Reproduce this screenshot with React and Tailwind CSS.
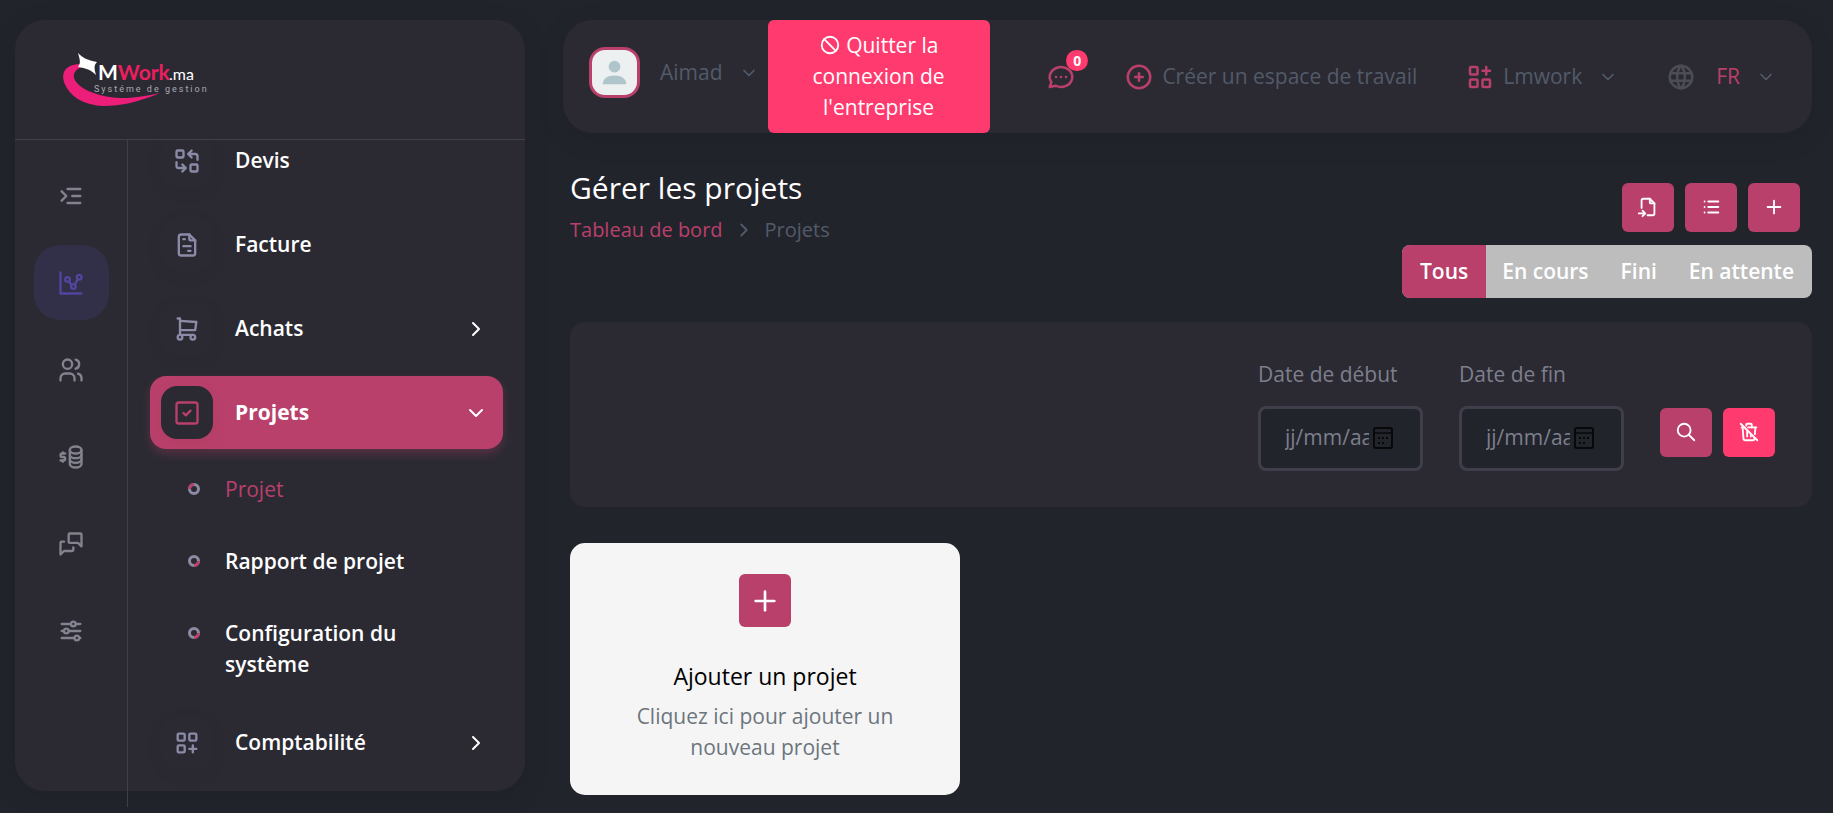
import {
  TbAdjustmentsHorizontal,
  TbApps,
  TbBan,
  TbBusinessplan,
  TbChartDots,
  TbCirclePlus,
  TbFileImport,
  TbFileInvoice,
  TbIndentIncrease,
  TbLayoutGridAdd,
  TbList,
  TbMessages,
  TbPlus,
  TbReplace,
  TbSearch,
  TbShoppingCart,
  TbSquareCheck,
  TbTrashOff,
  TbUsers,
  TbWorld,
} from "react-icons/tb";
import { FiChevronDown, FiChevronRight } from "react-icons/fi";

const RAIL = [
  { label: "Menu", icon: TbIndentIncrease },
  { label: "Tableau", icon: TbChartDots, active: true },
  { label: "Utilisateurs", icon: TbUsers },
  { label: "Finances", icon: TbBusinessplan },
  { label: "Messages", icon: TbMessages },
  { label: "Réglages", icon: TbAdjustmentsHorizontal },
];

const MENU = [
  { label: "Devis", icon: TbReplace },
  { label: "Facture", icon: TbFileInvoice },
  { label: "Achats", icon: TbShoppingCart, more: true },
  {
    label: "Projets",
    icon: TbSquareCheck,
    active: true,
    children: ["Projet", "Rapport de projet", "Configuration du système"],
  },
  { label: "Comptabilité", icon: TbLayoutGridAdd, more: true },
];

const TABS = ["Tous", "En cours", "Fini", "En attente"];

function Logo() {
  return (
    <svg viewBox="0 0 150 56" className="h-14 w-[150px]" role="img" aria-label="MWork.ma">
      <path
        d="M17 12C4 13-1 20 2 30c5 14 19 23 39 24 18 0 36-4 57-13-22 5-38 6-50 4C29 42 15 35 12 26c-1-5 2-9 8-11z"
        fill="#ed1e79"
      />
      <path d="M16 1c5 5 9 7 19 9-3 3-3 6-1 13-5-5-10-7-18-8 3-4 2-7 0-14z" fill="#fff" />
      <text x="36" y="28" fontFamily="Lato" fontSize="21" fontWeight="700" fill="#fff">
        M<tspan fill="#ed1e60">Work</tspan>
      </text>
      <text x="107" y="28" fontFamily="Lato" fontSize="16" fill="#fff">.ma</text>
      <text x="32" y="40" fontFamily="Roboto" fontSize="9" className="tracking-[2px]" fill="#a9a9b2">
        Systéme de gestion
      </text>
    </svg>
  );
}

function Bullet({ active }) {
  return (
    <svg viewBox="0 0 12 12" className={`mt-[9px] h-3 w-3 shrink-0 ${active ? "rotate-180" : ""}`} fill="none" strokeWidth="3">
      <circle cx="6" cy="6" r="4.5" stroke="#8b8ba3" />
      <path d="M10.5 6A4.5 4.5 0 0 1 6 10.5" stroke="#b9406a" />
    </svg>
  );
}

function ChatIcon() {
  return (
    <svg viewBox="0 0 24 24" className="h-[30px] w-[30px]" fill="none" stroke="currentColor" strokeWidth="2" strokeLinecap="round" strokeLinejoin="round">
      <path d="M3 20l1.3 -3.9a9 8 0 1 1 3.4 2.9l-4.7 1" />
      <path d="M12 12v.01M8 12v.01M16 12v.01" />
    </svg>
  );
}

function CalendarIcon() {
  return (
    <svg viewBox="0 0 20 22" className="h-[22px] w-5 shrink-0" fill="none" stroke="#08080a">
      <rect x="1" y="1" width="18" height="20" rx="2" strokeWidth="2" />
      <path d="M1 6h18" strokeWidth="1.5" />
      <path d="M5 11h2M9 11h2M13 11h2M5 16h2M9 16h2" strokeWidth="2" />
    </svg>
  );
}

function IconButton({ label, icon: Icon, danger }) {
  return (
    <button
      type="button"
      aria-label={label}
      className={`flex h-[49px] w-[52px] items-center justify-center rounded-md pb-0.5 text-white ${danger ? "bg-[#ff3a6e]" : "bg-[#b9406a]"}`}
    >
      <Icon size={22} />
    </button>
  );
}

function Sidebar() {
  return (
    <aside className="sticky top-0 h-screen w-[525px] shrink-0 pt-5 pb-[22px] pl-[15px]">
      <div className="flex h-full flex-col rounded-[30px] bg-[#2b2a33] shadow-[0_6px_30px_rgba(0,0,0,0.08)]">
        <div className="flex h-[120px] shrink-0 items-center border-b border-[#3f3f4c] pl-[47px]">
          <a href="#accueil">
            <Logo />
          </a>
        </div>

        <div className="flex min-h-0 grow">
          <nav className="-mb-4 flex w-[113px] shrink-0 flex-col items-center gap-3 border-r border-[#3f3f4c] pt-[18px]">
            {RAIL.map(({ label, icon: Icon, active }) => (
              <a
                key={label}
                href="#rail"
                aria-label={label}
                className={`flex h-[75px] w-[75px] items-center justify-center rounded-[26px] ${active ? "bg-[#322f48] text-[#51459d]" : "text-[#83838f]"}`}
              >
                <Icon size={28} />
              </a>
            ))}
          </nav>

          <nav className="grow overflow-hidden rounded-br-[30px] px-[22px]">
            <ul className="-mt-4 flex flex-col gap-[11px]">
              {MENU.map(({ label, icon: Icon, active, more, children }) => (
                <li key={label}>
                  <a
                    href="#menu"
                    className={`flex h-[73px] items-center rounded-2xl px-[11px] text-[21px] text-white ${active ? "bg-[#b9406a] font-bold shadow-[0_5px_10px_rgba(185,64,106,0.3)]" : "font-semibold"}`}
                  >
                    <span
                      className={`mr-[22px] flex h-[53px] w-[52px] items-center justify-center rounded-2xl bg-[#2b2a33] shadow-[0_4px_20px_rgba(0,0,0,0.04)] ${active ? "text-[#b9406a]" : "text-[#8b8ba7]"}`}
                    >
                      <Icon size={28} />
                    </span>
                    <span className="grow">{label}</span>
                    {more && <FiChevronRight size={24} className="mr-1" />}
                    {active && <FiChevronDown size={24} className="mr-1" />}
                  </a>
                  {children && (
                    <ul className="-mb-[5px] flex flex-col gap-px pt-[5px]">
                      {children.map((child, i) => (
                        <li key={child}>
                          <a
                            href="#sous-menu"
                            className={`flex gap-[25px] py-5 pr-20 pl-[38px] text-[21px] leading-[31px] ${i === 0 ? "text-[#b9406a]" : "font-semibold text-white"}`}
                          >
                            <Bullet active={i === 0} />
                            {child}
                          </a>
                        </li>
                      ))}
                    </ul>
                  )}
                </li>
              ))}
            </ul>
          </nav>
        </div>
      </div>
    </aside>
  );
}

function Topbar() {
  return (
    <header className="flex h-[113px] items-center justify-between rounded-[30px] bg-[#2b2a33] pr-9 pl-[26px] text-[21px] text-[#525b69] shadow-[0_6px_30px_rgba(0,0,0,0.08)]">
      <div className="flex h-full items-center">
        <button type="button" className="mb-2 flex items-center">
          <svg viewBox="0 0 46 46" className="mr-5 h-[51px] w-[51px] rounded-2xl border-3 border-[#b9406a] bg-[#ecf0f1]">
            <circle cx="23" cy="17" r="6" fill="#b0c4cc" />
            <path d="M11 35c0-6 5-9 12-9s12 3 12 9z" fill="#b0c4cc" />
          </svg>
          Aimad
          <FiChevronDown size={20} className="ml-4" />
        </button>
        <button type="button" className="ml-[9px] h-full w-[222px] rounded-md bg-[#ff3a6e] px-9 leading-[31px] text-white">
          <TbBan size={22} className="mb-1 inline" /> Quitter la connexion de l'entreprise
        </button>
      </div>

      <div className="flex items-center">
        <button type="button" aria-label="Messages" className="relative mr-12 text-[#b9406a]">
          <ChatIcon />
          <span className="absolute -top-3 left-5 flex h-[21px] w-[22px] items-center justify-center rounded-full bg-[#ff3a6e] text-[14px] font-bold text-white">
            0
          </span>
        </button>
        <button type="button" className="mr-12 flex items-center gap-2">
          <TbCirclePlus size={30} className="text-[#b9406a]" />
          Créer un espace de travail
        </button>
        <button type="button" className="mr-12 flex items-center">
          <TbApps size={30} className="mr-2 text-[#b9406a]" />
          Lmwork
          <FiChevronDown size={20} className="ml-4" />
        </button>
        <button type="button" className="flex items-center">
          <TbWorld size={30} className="mr-5 text-[#4c4d54]" />
          <span className="text-[#b9406a]">FR</span>
          <FiChevronDown size={20} className="ml-4" />
        </button>
      </div>
    </header>
  );
}

function DateField({ id, label }) {
  return (
    <div className="w-[165px]">
      <label htmlFor={id} className="block text-[21px] leading-[31px] text-[#7d7f8c]">
        {label}
      </label>
      <div className="mt-4 flex h-[65px] items-center gap-1 rounded-lg border-3 border-[#3f3e4a] bg-[#22242c] pb-0.5 pl-6">
        <input
          id={id}
          type="text"
          placeholder="jj/mm/aaaa"
          className="w-[84px] text-[21px] text-[#7d7f8c] outline-none placeholder:text-[#7d7f8c]"
        />
        <CalendarIcon />
      </div>
    </div>
  );
}

export default function App() {
  return (
    <div className="flex min-h-screen bg-[#22242c] font-['Open_Sans',sans-serif]">
      <Sidebar />

      <div className="min-w-0 grow pt-5 pr-[21px] pb-4 pl-[38px]">
        <Topbar />

        <main className="pl-[7px]">
          <div className="flex justify-between pt-9">
            <div>
              <h1 className="text-[30px] leading-[38px] font-medium text-white">Gérer les projets</h1>
              <nav className="mt-2 flex items-center text-[20px] leading-[30px] text-[#525b69]">
                <a href="#tableau" className="text-[#b9406a]">
                  Tableau de bord
                </a>
                <FiChevronRight size={22} className="mx-2.5" />
                <span>Projets</span>
              </nav>
            </div>
            <div className="flex flex-col items-end gap-[13px] pt-[14px]">
              <div className="flex gap-[11px] pr-3">
                <IconButton label="Importer" icon={TbFileImport} />
                <IconButton label="Liste" icon={TbList} />
                <IconButton label="Ajouter" icon={TbPlus} />
              </div>
              <div className="flex h-[53px] overflow-hidden rounded-lg bg-[#bdbdbd] text-[21px] font-semibold text-white">
                {TABS.map((tab, i) => (
                  <button key={tab} type="button" className={i === 0 ? "bg-[#b9406a] px-[18px]" : "px-4 last:pr-[18px]"}>
                    {tab}
                  </button>
                ))}
              </div>
            </div>
          </div>

          <form className="mt-6 flex justify-end gap-9 rounded-[15px] bg-[#2b2a33] px-[37px] pt-[37px] pb-9">
            <DateField id="debut" label="Date de début" />
            <DateField id="fin" label="Date de fin" />
            <div className="flex gap-[11px] pt-[49px]">
              <IconButton label="Rechercher" icon={TbSearch} />
              <IconButton label="Réinitialiser" icon={TbTrashOff} danger />
            </div>
          </form>

          <div className="mt-9 grid grid-cols-3 gap-9">
            <a href="#nouveau" className="flex flex-col items-center rounded-[15px] bg-[#f5f5f5] px-14 pt-[31px] pb-8 text-center">
              <span className="flex h-[53px] w-[52px] items-center justify-center rounded-md bg-[#b9406a] text-white">
                <TbPlus size={32} />
              </span>
              <h2 className="mt-8 text-[23px] leading-[34px] font-medium text-black">Ajouter un projet</h2>
              <p className="mt-2 text-[21px] leading-[31px] text-[#6c757d]">Cliquez ici pour ajouter un nouveau projet</p>
            </a>
          </div>
        </main>
      </div>
    </div>
  );
}
